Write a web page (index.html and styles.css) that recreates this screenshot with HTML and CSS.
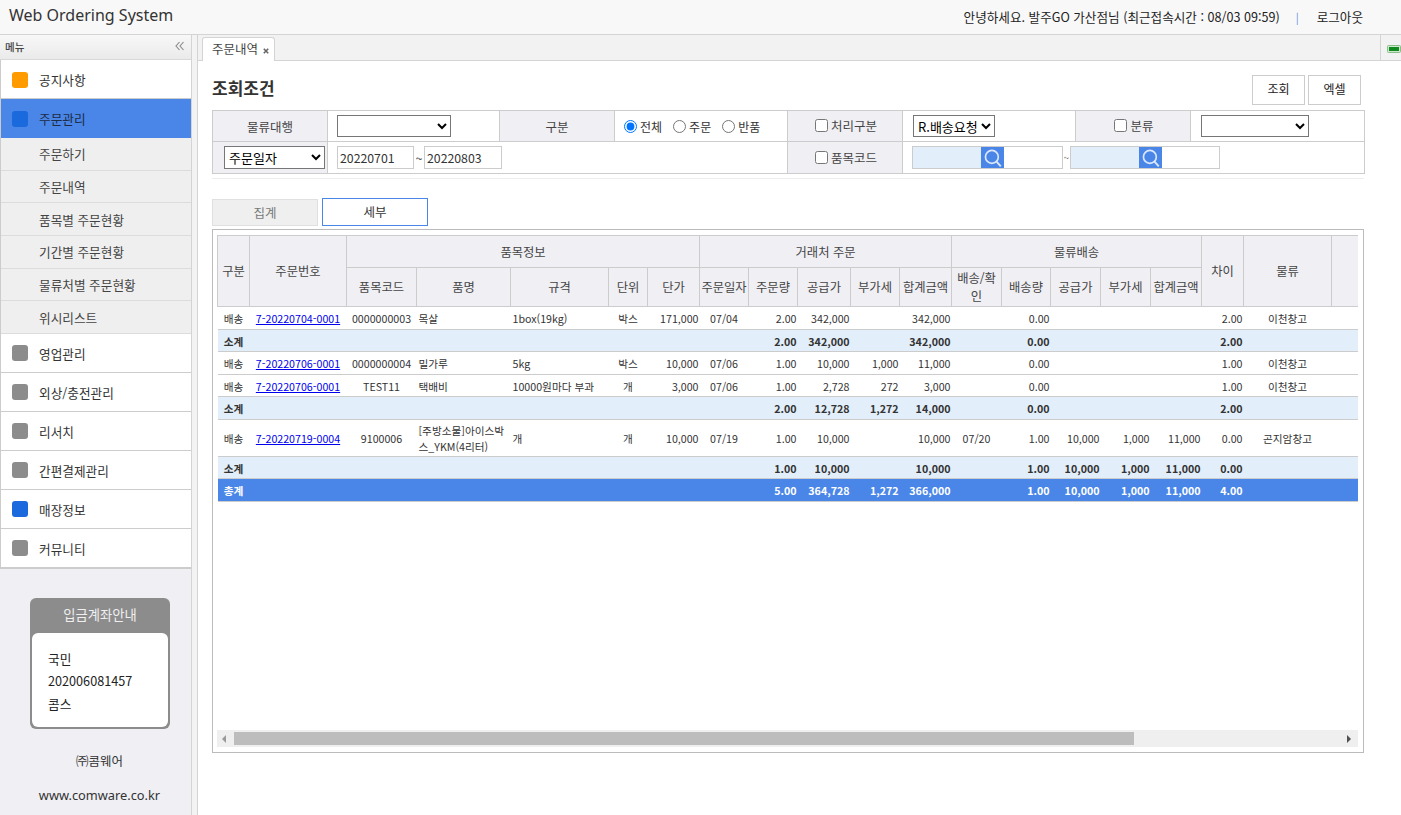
FILE: index.html
```html
<!DOCTYPE html>
<html lang="ko">
<head>
<meta charset="utf-8">
<title>Web Ordering System</title>
<link rel="stylesheet" href="styles.css">
</head>
<body>
<header class="topbar">
  <div class="brand">Web Ordering System</div>
  <div class="userinfo">
    <span>안녕하세요. 발주GO 가산점님 (최근접속시간 : 08/03 09:59)</span>
    <span class="divider">|</span>
    <a class="logout">로그아웃</a>
  </div>
</header>
<div class="layout">
  <aside class="sidebar">
    <div class="side-panel">
      <div class="menu-head"><span>메뉴</span>
        <svg class="collapse" width="10" height="10" viewBox="0 0 10 10"><path d="M4.5 1 1 5l3.5 4M8.5 1 5 5l3.5 4" fill="none" stroke="#888" stroke-width="1.1"/></svg>
      </div>
      <nav class="menu">
        <div class="item"><i class="sq orange"></i>공지사항</div>
        <div class="item active"><i class="sq blue"></i>주문관리</div>
        <div class="sub">주문하기</div>
        <div class="sub">주문내역</div>
        <div class="sub">품목별 주문현황</div>
        <div class="sub">기간별 주문현황</div>
        <div class="sub">물류처별 주문현황</div>
        <div class="sub">위시리스트</div>
        <div class="item"><i class="sq grey"></i>영업관리</div>
        <div class="item"><i class="sq grey"></i>외상/충전관리</div>
        <div class="item"><i class="sq grey"></i>리서치</div>
        <div class="item"><i class="sq grey"></i>간편결제관리</div>
        <div class="item"><i class="sq blue"></i>매장정보</div>
        <div class="item"><i class="sq grey"></i>커뮤니티</div>
      </nav>
      <div class="account">
        <div class="account-title">입금계좌안내</div>
        <div class="account-body"><p>국민</p><p>202006081457</p><p>콤스</p></div>
      </div>
      <div class="company">㈜콤웨어</div>
      <div class="site">www.comware.co.kr</div>
    </div>
    <div class="splitter"></div>
  </aside>
  <main class="main">
    <div class="tabbar">
      <div class="tab">주문내역<svg class="tab-x" width="6" height="6" viewBox="0 0 6 6"><path d="m.8.8 4.400 4.400m0-4.400L.8 5.200" stroke="#666" stroke-width="1.600"/></svg></div>
      <div class="tabbar-end"><svg width="14" height="8" viewBox="0 0 14 8"><rect x=".5" y=".5" width="13" height="7" rx="1" fill="#cfe6cf" stroke="#8bbd8b"/><rect x="2" y="2" width="10" height="4" fill="#0f8a1c"/></svg></div>
    </div>
    <div class="content">
      <div class="toolbar">
        <h1>조회조건</h1>
        <div class="buttons"><button class="btn">조회</button><button class="btn">엑셀</button></div>
      </div>
      <div class="search-wrap">
        <table class="search">
          <colgroup><col class="s1"><col class="s2"><col class="s3"><col class="s4"><col class="s5"><col class="s6"><col class="s7"><col class="s8"></colgroup>
          <tr class="sr1">
            <th>물류대행</th>
            <td class="pad"><select class="sel-a"><option></option></select></td>
            <th>구분</th>
            <td class="pad">
              <div class="radios">
                <label><input type="radio" name="k" checked>전체</label>
                <label><input type="radio" name="k">주문</label>
                <label><input type="radio" name="k">반품</label>
              </div>
            </td>
            <th><label class="chk"><input type="checkbox">처리구분</label></th>
            <td class="pad"><select class="sel-r"><option>R.배송요청</option></select></td>
            <th><label class="chk"><input type="checkbox">분류</label></th>
            <td class="pad"><select class="sel-b"><option></option></select></td>
          </tr>
          <tr class="sr2">
            <th><select class="sel-d"><option>주문일자</option></select></th>
            <td colspan="3" class="pad">
              <div class="dates"><input class="date" value="20220701"><span class="tilde">~</span><input class="date" value="20220803"></div>
            </td>
            <th><label class="chk"><input type="checkbox">품목코드</label></th>
            <td colspan="3" class="pad">
              <div class="codes">
                <div class="code"><span class="code-a"></span><span class="code-btn"><svg width="20" height="20" viewBox="0 0 18 18"><circle cx="8" cy="8" r="5.800" fill="none" stroke="#dbe8fb" stroke-width="1.500"/><path d="m12 12 4 4.500" stroke="#dbe8fb" stroke-width="1.700"/></svg></span><span class="code-c"></span></div>
                <span class="tilde-s">~</span>
                <div class="code"><span class="code-a"></span><span class="code-btn"><svg width="20" height="20" viewBox="0 0 18 18"><circle cx="8" cy="8" r="5.800" fill="none" stroke="#dbe8fb" stroke-width="1.500"/><path d="m12 12 4 4.500" stroke="#dbe8fb" stroke-width="1.700"/></svg></span><span class="code-c"></span></div>
              </div>
            </td>
          </tr>
        </table>
      </div>
      <div class="subtabs"><div class="subtab">집계</div><div class="subtab on">세부</div></div>
      <div class="gridbox">
        <div class="gridclip">
          <table class="grid">
            <colgroup>
              <col class="w32"><col class="w97"><col class="w70"><col class="w94"><col class="w98"><col class="w39"><col class="w52">
              <col class="w49"><col class="w49"><col class="w53"><col class="w49"><col class="w52">
              <col class="w50"><col class="w49"><col class="w50"><col class="w50"><col class="w51">
              <col class="w42"><col class="w88"><col class="w70">
            </colgroup>
            <thead>
              <tr class="h1">
                <th rowspan="2">구분</th><th rowspan="2">주문번호</th><th colspan="5">품목정보</th><th colspan="5">거래처 주문</th><th colspan="5">물류배송</th><th rowspan="2">차이</th><th rowspan="2">물류</th><th rowspan="2"></th>
              </tr>
              <tr class="h2">
                <th>품목코드</th><th>품명</th><th>규격</th><th>단위</th><th>단가</th>
                <th>주문일자</th><th>주문량</th><th>공급가</th><th>부가세</th><th>합계금액</th>
                <th class="wrap">배송/확인</th><th>배송량</th><th>공급가</th><th>부가세</th><th>합계금액</th>
              </tr>
            </thead>
            <tbody>
              <tr class="r23">
                <td class="c">배송</td><td class="c"><a href="#">7-20220704-0001</a></td><td class="c">0000000003</td><td class="l">목살</td><td class="l">1box(19kg)</td><td class="c">박스</td><td class="n">171,000</td>
                <td class="c">07/04</td><td class="n">2.00</td><td class="n">342,000</td><td class="n"></td><td class="n">342,000</td>
                <td class="c"></td><td class="n">0.00</td><td class="n"></td><td class="n"></td><td class="n"></td>
                <td class="n">2.00</td><td class="c">이천창고</td><td></td>
              </tr>
              <tr class="r22 st">
                <td class="c">소계</td><td colspan="7"></td><td class="n">2.00</td><td class="n">342,000</td><td></td><td class="n">342,000</td><td></td><td class="n">0.00</td><td colspan="3"></td><td class="n">2.00</td><td colspan="2"></td>
              </tr>
              <tr class="r23">
                <td class="c">배송</td><td class="c"><a href="#">7-20220706-0001</a></td><td class="c">0000000004</td><td class="l">밀가루</td><td class="l">5kg</td><td class="c">박스</td><td class="n">10,000</td>
                <td class="c">07/06</td><td class="n">1.00</td><td class="n">10,000</td><td class="n">1,000</td><td class="n">11,000</td>
                <td class="c"></td><td class="n">0.00</td><td class="n"></td><td class="n"></td><td class="n"></td>
                <td class="n">1.00</td><td class="c">이천창고</td><td></td>
              </tr>
              <tr class="r22">
                <td class="c">배송</td><td class="c"><a href="#">7-20220706-0001</a></td><td class="c">TEST11</td><td class="l">택배비</td><td class="l">10000원마다 부과</td><td class="c">개</td><td class="n">3,000</td>
                <td class="c">07/06</td><td class="n">1.00</td><td class="n">2,728</td><td class="n">272</td><td class="n">3,000</td>
                <td class="c"></td><td class="n">0.00</td><td class="n"></td><td class="n"></td><td class="n"></td>
                <td class="n">1.00</td><td class="c">이천창고</td><td></td>
              </tr>
              <tr class="r23 st">
                <td class="c">소계</td><td colspan="7"></td><td class="n">2.00</td><td class="n">12,728</td><td class="n">1,272</td><td class="n">14,000</td><td></td><td class="n">0.00</td><td colspan="3"></td><td class="n">2.00</td><td colspan="2"></td>
              </tr>
              <tr class="r37">
                <td class="c">배송</td><td class="c"><a href="#">7-20220719-0004</a></td><td class="c">9100006</td><td class="l">[주방소물]아이스박스_YKM(4리터)</td><td class="l">개</td><td class="c">개</td><td class="n">10,000</td>
                <td class="c">07/19</td><td class="n">1.00</td><td class="n">10,000</td><td class="n"></td><td class="n">10,000</td>
                <td class="c">07/20</td><td class="n">1.00</td><td class="n">10,000</td><td class="n">1,000</td><td class="n">11,000</td>
                <td class="n">0.00</td><td class="c">곤지암창고</td><td></td>
              </tr>
              <tr class="r22 st">
                <td class="c">소계</td><td colspan="7"></td><td class="n">1.00</td><td class="n">10,000</td><td></td><td class="n">10,000</td><td></td><td class="n">1.00</td><td class="n">10,000</td><td class="n">1,000</td><td class="n">11,000</td><td class="n">0.00</td><td colspan="2"></td>
              </tr>
              <tr class="r23 tot">
                <td class="c">총계</td><td colspan="7"></td><td class="n">5.00</td><td class="n">364,728</td><td class="n">1,272</td><td class="n">366,000</td><td></td><td class="n">1.00</td><td class="n">10,000</td><td class="n">1,000</td><td class="n">11,000</td><td class="n">4.00</td><td colspan="2"></td>
              </tr>
            </tbody>
          </table>
        </div>
        <div class="scrollbar">
          <svg class="arrow" width="6" height="8" viewBox="0 0 6 8"><path d="M5 0v8L1 4z" fill="#999"/></svg>
          <div class="thumb"></div>
          <svg class="arrow" width="6" height="8" viewBox="0 0 6 8"><path d="M1 0v8l4-4z" fill="#505050"/></svg>
        </div>
      </div>
    </div>
  </main>
</div>
</body>
</html>
```

FILE: styles.css
```css
* { box-sizing: border-box; }
html, body { margin: 0; height: 815px; overflow: hidden; }
body {
  font-family: "Noto Sans CJK KR", "Noto Sans", sans-serif;
  font-size: 12.5px;
  color: #333;
  background: #fff;
  display: flex;
  flex-direction: column;
}
.topbar {
  height: 35px;
  flex: none;
  background: #f8f8f8;
  border-bottom: 1px solid #d4d4d4;
  display: flex;
  align-items: center;
  justify-content: space-between;
  padding: 0 38px 4px 9px;
}
.brand { font-family: "Noto Sans", sans-serif; font-size: 16px; color: #333; }
.userinfo { display: flex; align-items: center; font-size: 12.6px; color: #222; padding-top: 3px; }
.divider { color: #5a8fd8; margin: 0 18px 0 16px; font-size: 11px; }
.logout { color: #222; }
.layout { flex: 1; display: flex; min-height: 0; }
.sidebar { width: 198px; flex: none; display: flex; }
.side-panel { width: 192px; background: #efeff4; border-right: 1px solid #d4d4d4; display: flex; flex-direction: column; }
.splitter { width: 6px; background: #f3f3f3; border-right: 1px solid #d4d4d4; }
.menu-head {
  height: 25px;
  background: linear-gradient(#f8f8f8, #eaeaea);
  border-bottom: 1px solid #d8d8d8;
  display: flex;
  align-items: center;
  justify-content: space-between;
  padding: 0 6px 2px 5px;
  font-size: 10.5px;
  font-weight: 500;
  color: #444;
}
.menu { border-left: 1px solid #ccc; border-bottom: 1px solid #ccc; }
.item {
  height: 39px;
  background: #fff;
  border-bottom: 1px solid #ccc;
  display: flex;
  align-items: center;
  padding: 1px 0 0 11px;
  font-size: 12.67px;
  color: #333;
}
.item.active { background: #4a86e8; border-bottom-color: #4a86e8; color: #1d2c44; }
.sq { width: 16px; height: 16px; border-radius: 3px; margin-right: 11px; display: block; }
.orange { background: #ff9a00; }
.blue { background: #1a69dd; }
.grey { background: #8c8c8c; }
.sub {
  height: 32.67px;
  background: #efefef;
  border-bottom: 1px solid #dcdcdc;
  display: flex;
  align-items: center;
  padding-left: 38px;
  font-size: 12.67px;
  color: #444;
}
.account {
  width: 140px;
  height: 131px;
  margin: 29px 0 0 30px;
  background: #8c8c8c;
  border-radius: 6px;
  padding: 0 2px 2px;
  display: flex;
  flex-direction: column;
}
.account-title { height: 35px; flex: none; line-height: 34px; text-align: center; color: #f0f0f0; font-size: 13.3px; }
.account-body { flex: 1; background: #fff; border-radius: 6px; padding: 15px 16px 0; font-size: 12.67px; color: #222; }
.account-body p { margin: 0; line-height: 22.5px; }
.company { text-align: center; font-size: 12.5px; color: #333; margin-top: 23px; line-height: 18px; padding-left: 8px; }
.site { text-align: center; font-size: 12.8px; font-family: "Noto Sans", sans-serif; color: #333; margin-top: 16px; line-height: 18px; padding-left: 8px; }
.main { flex: 1; min-width: 0; display: flex; flex-direction: column; }
.tabbar {
  height: 26px;
  flex: none;
  background: #f2f2f2;
  border-bottom: 1px solid #d4d4d4;
  display: flex;
  justify-content: space-between;
  padding-left: 4px;
}
.tab {
  margin-top: 2px;
  width: 73px;
  height: 24px;
  background: #fff;
  border: 1px solid #d4d4d4;
  border-bottom: 0;
  border-radius: 3px 3px 0 0;
  font-size: 12.5px;
  color: #444;
  padding-left: 9px;
  line-height: 22px;
  white-space: nowrap;
}
.tab-x { margin-left: 5px; vertical-align: 0; }
.tabbar-end { width: 21px; border-left: 1px solid #d4d4d4; padding: 10px 0 0 6px; overflow: hidden; }
.tabbar-end svg { display: block; }
.content { padding: 14px 0 0 14px; }
.toolbar { width: 1152px; height: 30px; display: flex; align-items: center; justify-content: space-between; padding-right: 3px; margin-bottom: 5px; }
h1 { margin: 0 0 4px; font-size: 17px; font-weight: 700; color: #333; line-height: 24px; }
.buttons { display: flex; gap: 3px; }
.btn { width: 53px; height: 30px; background: #fff; border: 1px solid #ccc; font: inherit; font-size: 12px; color: #222; padding: 0 0 3px; }
.search-wrap { width: 1152px; border-bottom: 1px solid #eee; padding-bottom: 4px; }
.search { width: 1152px; table-layout: fixed; border-collapse: collapse; }
.search th, .search td { border: 1px solid #ccc; padding: 0; }
.sr1 { height: 31px; }
.sr2 { height: 32px; }
.search th { background: #efeff4; font-weight: 400; color: #444; text-align: center; font-size: 12.5px; }
.s1 { width: 115px; } .s2 { width: 172px; } .s3 { width: 115px; } .s4 { width: 173px; }
.s5 { width: 115px; } .s6 { width: 173px; } .s7 { width: 115px; } .s8 { width: 174px; }
.search td.pad { padding-left: 9px; }
select { font-family: "Noto Sans CJK KR", sans-serif; font-size: 13px; color: #000; background: #fff; height: 22px; padding: 0; display: block; }
.sel-a { width: 114px; }
.sel-r { width: 82px; margin-left: 1px; }
.sel-b { width: 108px; margin-left: 1px; }
.sel-d { width: 101px; height: 23px; margin-left: 11px; }
.radios { display: flex; gap: 11px; font-size: 12px; color: #333; }
.radios label, .chk { display: inline-flex; align-items: center; }
.radios input { margin: 0 3px 0 0; }
.chk { padding-left: 2px; }
.chk input { margin: 0 3px 0 0; }
.dates { display: flex; align-items: center; }
.date { width: 77px; height: 23px; border: 1px solid #ccc; padding: 0 2px; font: inherit; font-size: 12.3px; color: #333; }
.date:last-child { width: 78px; }
.tilde { width: 10px; text-align: center; font-size: 12px; }
.codes { display: flex; align-items: center; }
.code { display: flex; height: 23px; border: 1px solid #ccc; }
.code-a { width: 68px; background: #e2eefa; }
.code-btn { width: 23px; background: #4a86e8; display: flex; align-items: center; justify-content: center; }
.code:first-child .code-c { width: 58px; }
.code-c { width: 57px; background: #fff; }
.tilde-s { width: 7px; font-size: 9px; text-align: center; }
.subtabs { display: flex; gap: 4px; margin-top: 18px; align-items: flex-end; height: 29px; }
.subtab { width: 106px; height: 27px; background: #efefef; border: 1px solid #e0e0e0; text-align: center; line-height: 25px; font-size: 12.5px; color: #777; }
.subtab.on { height: 28px; background: #fff; border-color: #4a86e8; color: #333; line-height: 26px; }
.gridbox { width: 1152px; height: 524px; margin-top: 3px; border: 1px solid #bbb; padding: 5px 5px 5px 4px; display: flex; flex-direction: column; }
.gridclip { flex: 1; overflow: hidden; min-height: 0; }
.grid { width: 1184px; table-layout: fixed; border-collapse: collapse; font-size: 10.67px; color: #333; }
.w32 { width: 32px; } .w97 { width: 97px; } .w70 { width: 70px; } .w94 { width: 94px; } .w98 { width: 98px; }
.w39 { width: 39px; } .w52 { width: 52px; } .w49 { width: 49px; } .w53 { width: 53px; } .w50 { width: 50px; }
.w51 { width: 51px; } .w42 { width: 42px; } .w88 { width: 88px; }
.grid th { background: #efeff4; border: 1px solid #ccc; font-weight: 400; font-size: 12.3px; color: #444; padding: 0; line-height: 18px; text-align: center; }
.grid th.wrap { padding: 0 4px; }
.h1 { height: 32px; }
.h2 { height: 39px; }
.grid td { border-bottom: 1px solid #ccc; padding: 2px 0 0; line-height: 16px; }
.r23 { height: 23px; }
.r22 { height: 22px; }
.r37 { height: 37px; }
.grid td.c { text-align: center; }
.grid td.l { text-align: left; padding-left: 2px; }
.grid td.n { text-align: right; padding-right: 1px; }
.grid a { color: #00e; text-decoration: underline; }
.st td { background: #e2eefa; font-weight: 700; color: #333; }
.tot td { background: #4a86e8; font-weight: 700; color: #fff; }
.scrollbar { height: 17px; flex: none; background: #efefef; display: flex; align-items: center; padding: 0 6px 0 4px; gap: 6px; }
.thumb { width: 900px; height: 13px; background: #bdbdbd; margin-right: auto; margin-left: 1px; }
.arrow { flex: none; display: block; }
```
